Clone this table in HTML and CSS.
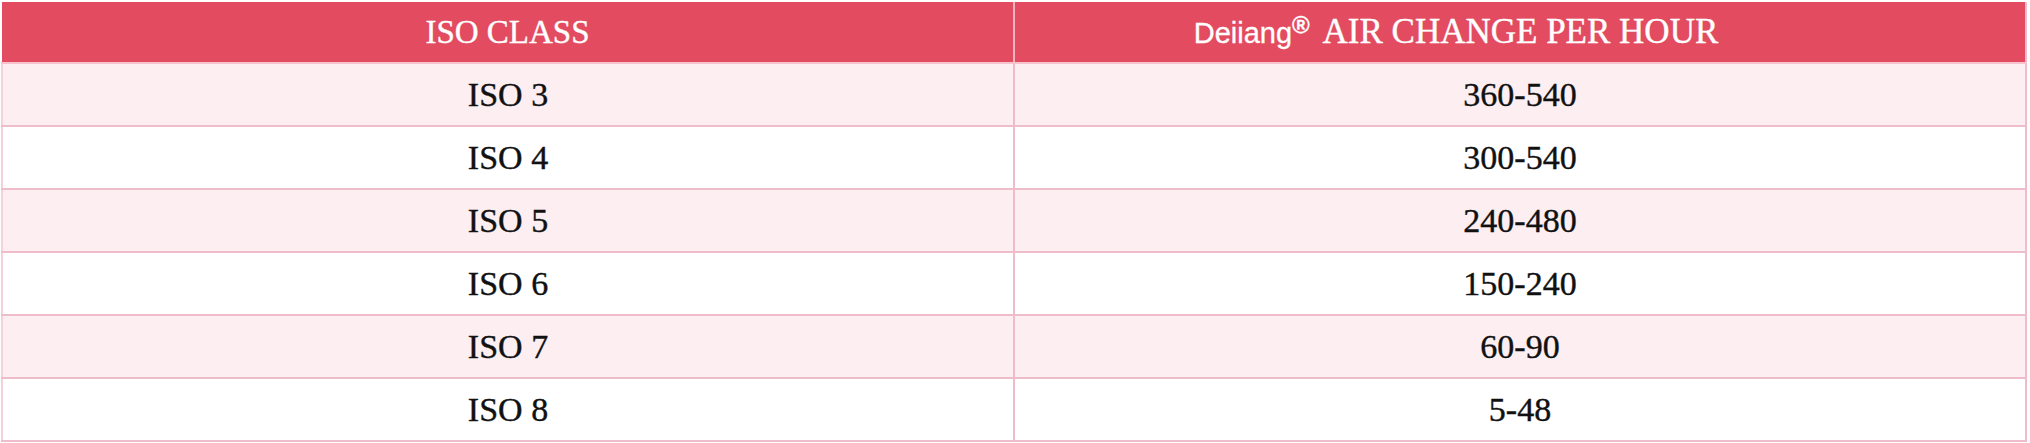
FILE: index.html
```html
<!DOCTYPE html>
<html>
<head>
<meta charset="utf-8">
<link rel="stylesheet" href="styles.css">
</head>
<body>
<table class="ach">
  <thead>
    <tr>
      <th class="c1">ISO CLASS</th>
      <th class="c2"><span class="brand">Deiiang<sup>®</sup></span> AIR CHANGE PER HOUR</th>
    </tr>
  </thead>
  <tbody>
    <tr><td>ISO 3</td><td>360-540</td></tr>
    <tr><td>ISO 4</td><td>300-540</td></tr>
    <tr><td>ISO 5</td><td>240-480</td></tr>
    <tr><td>ISO 6</td><td>150-240</td></tr>
    <tr><td>ISO 7</td><td>60-90</td></tr>
    <tr><td>ISO 8</td><td>5-48</td></tr>
  </tbody>
</table>
</body>
</html>
```

FILE: styles.css
```css
html, body {
  margin: 0;
  background: #ffffff;
}
body {
  padding: 2px 3px 0 1px;
}
.ach {
  width: 2026px;
  border-collapse: collapse;
  table-layout: fixed;
  font-family: "Liberation Serif", "Times New Roman", serif;
}
.ach th, .ach td {
  text-align: center;
  vertical-align: middle;
  padding: 0;
  -webkit-text-stroke: 0.4px currentColor;
}
.ach th {
  height: 60px;
  background: #e34c60;
  color: #ffffff;
  font-weight: normal;
  font-size: 33px;
  border-right: 2px solid #f2b3c0;
  border-bottom: 2px solid #f6c3cd;
}
.ach th:last-child {
  border-right: 2px solid #ecbcc8;
}
.ach th.c2 {
  padding-right: 128px;
  font-size: 35px;
}
.brand {
  font-family: "Liberation Sans", Arial, sans-serif;
  font-size: 29px;
  margin-right: 6px;
  -webkit-text-stroke: 0.3px currentColor;
}
.brand sup {
  font-size: 24px;
  font-weight: bold;
  vertical-align: 10px;
  line-height: 0;
}
.ach td {
  height: 61px;
  font-size: 34px;
  color: #111111;
  border: 2px solid #efbccb;
  border-top: 0;
}
.ach td:first-child {
  border-left: 2px solid #f3d3db;
}
.ach tbody tr:nth-child(odd) td {
  background: #fdeef1;
}
.ach tbody tr:nth-child(even) td {
  background: #ffffff;
}
```
